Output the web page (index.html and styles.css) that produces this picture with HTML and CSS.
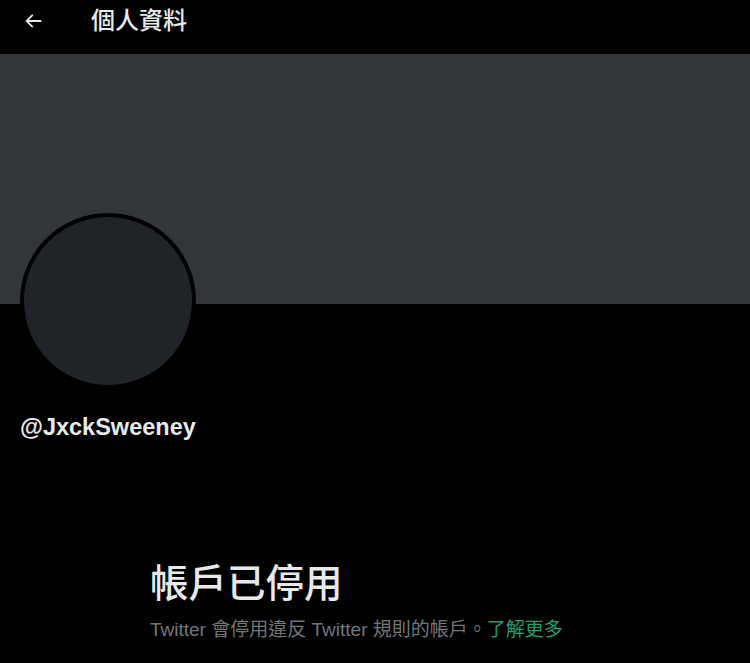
FILE: index.html
```html
<!DOCTYPE html>
<html lang="zh-Hant">
<head>
<meta charset="utf-8">
<link rel="stylesheet" href="styles.css">
</head>
<body>
<div class="page">
  <header class="topbar">
    <span class="back">
      <svg viewBox="0 0 24 24" width="22" height="22"><path fill="#e7e9ea" d="M7.414 13l5.043 5.04-1.414 1.42L3.586 12l7.457-7.46 1.414 1.42L7.414 11H21v2H7.414z"/></svg>
    </span>
    <h1 class="title">個人資料</h1>
  </header>
  <div class="banner"></div>
  <div class="profile">
    <div class="avatar"></div>
    <div class="handle">@JxckSweeney</div>
  </div>
  <section class="notice">
    <h2 class="notice-title">帳戶已停用</h2>
    <p class="notice-text">Twitter 會停用違反 Twitter 規則的帳戶。<a class="link">了解更多</a></p>
  </section>
</div>
</body>
</html>
```
FILE: styles.css
```css
html, body {
  margin: 0;
  padding: 0;
  background: #000;
}
body {
  font-family: "Liberation Sans", "Noto Sans CJK TC", sans-serif;
  color: #e7e9ea;
  width: 750px;
  height: 663px;
  overflow: hidden;
}
.topbar {
  height: 54px;
  display: flex;
  align-items: center;
  padding-left: 22px;
  padding-bottom: 13px;
  box-sizing: border-box;
}
.back {
  display: flex;
  width: 22px;
  height: 22px;
  margin-right: 47px;
}
.title {
  margin: 0 0 3px;
  font-family: "Noto Sans CJK TC", sans-serif;
  font-size: 24px;
  font-weight: 500;
  line-height: 1;
}
.banner {
  height: 250px;
  background: #333639;
}
.profile {
  padding-left: 20px;
}
.avatar {
  width: 168px;
  height: 168px;
  border-radius: 50%;
  background: #202327;
  border: 4px solid #000;
  margin-top: -91px;
}
.handle {
  margin-top: 24px;
  font-size: 23.5px;
  font-weight: 700;
  line-height: 28px;
}
.notice {
  padding-left: 150px;
  margin-top: 117px;
}
.notice-title {
  margin: 0;
  font-family: "Noto Sans CJK TC", sans-serif;
  font-size: 38.5px;
  font-weight: 500;
  line-height: 44px;
}
.notice-text {
  margin: 15px 0 0;
  font-size: 19px;
  line-height: 26px;
  color: #71767b;
}
.link {
  color: #1f9e74;
}
```
